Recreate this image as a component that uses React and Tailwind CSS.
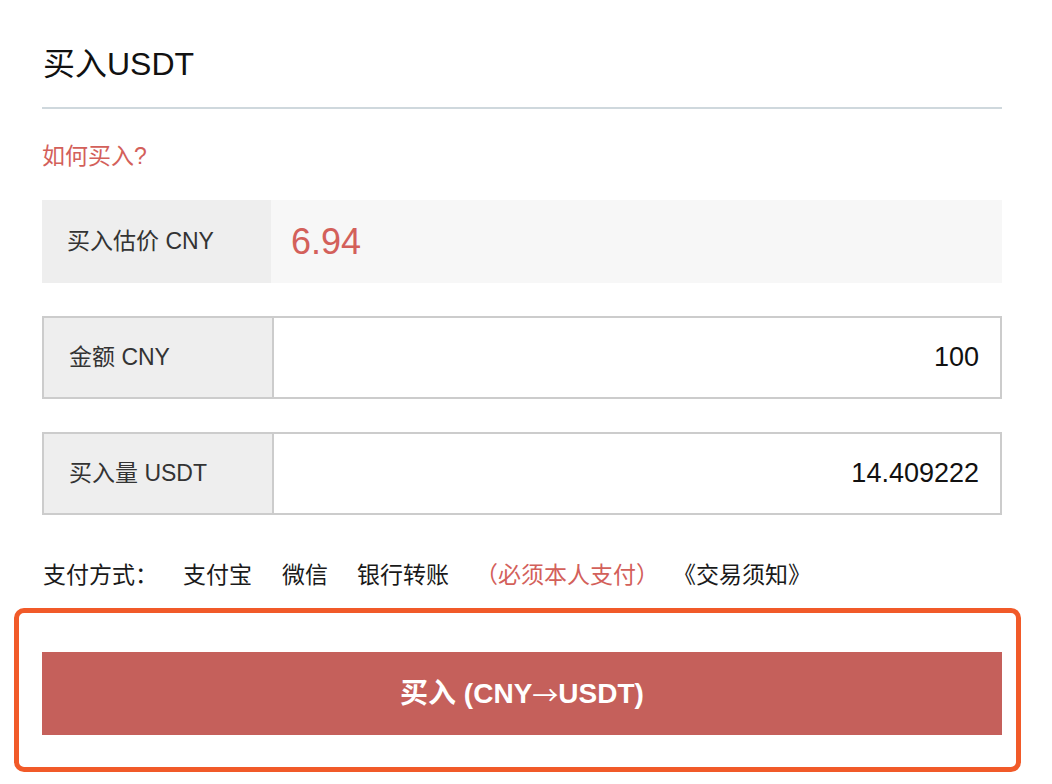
import React from "react";

const FONT = { fontFamily: '"Liberation Sans", "Noto Sans CJK SC", sans-serif' };

export default function App() {
  return (
    <div className="w-[1052px] h-[784px] bg-white overflow-hidden" style={FONT}>
      <div className="pl-[42px] w-[1002px]">
        <div className="pt-[44px] pb-[23px] border-b-2 border-[#cfd8dd]">
          <h1 className="text-[32px] leading-[40px] text-[#111] pl-[1px]">买入USDT</h1>
        </div>
        <div className="mt-[31px] text-[23px] leading-[32px] text-[#d3605a]">如何买入?</div>

        <div className="mt-[28px] flex h-[83px] bg-[#f7f7f7]">
          <div className="w-[229px] bg-[#eeeeee] flex items-center pl-[25px] text-[23px] text-[#333]">
            买入估价 CNY
          </div>
          <div className="flex items-center pl-[20px] text-[36px] text-[#d3605a]">6.94</div>
        </div>

        <div className="mt-[33px] flex h-[83px] border-2 border-[#cccccc]">
          <div className="w-[230px] bg-[#eeeeee] border-r-2 border-[#cccccc] flex items-center pl-[25px] text-[23px] text-[#333]">
            金额 CNY
          </div>
          <div className="flex-1 flex items-center justify-end pr-[21px] text-[27px] text-[#111]">100</div>
        </div>

        <div className="mt-[33px] flex h-[83px] border-2 border-[#cccccc]">
          <div className="w-[230px] bg-[#eeeeee] border-r-2 border-[#cccccc] flex items-center pl-[25px] text-[23px] text-[#333]">
            买入量 USDT
          </div>
          <div className="flex-1 flex items-center justify-end pr-[21px] text-[27px] text-[#111]">14.409222</div>
        </div>

        <div className="mt-[44px] flex items-center text-[23px] leading-[32px] text-[#1a1a1a] pl-[1px]">
          <span>支付方式：</span>
          <span className="ml-[25px]">支付宝</span>
          <span className="ml-[30px]">微信</span>
          <span className="ml-[29px]">银行转账</span>
          <span className="ml-[26px] text-[#d3605a]">（必须本人支付）</span>
          <span className="ml-[14px]">《交易须知》</span>
        </div>
      </div>

      <div className="mt-[17px] ml-[14px] w-[1007px] h-[164px] border-[5px] border-[#f15a29] rounded-[10px] pt-[39px] pl-[23px] pr-[14px]">
        <button className="w-full h-[83px] bg-[#c5605b] text-white font-bold text-[28px] flex items-center justify-center">
          <span>买入 (CNY</span>
          <span style={{ fontFamily: '"Noto Sans CJK SC", sans-serif' }} className="font-normal text-[26px]">→</span>
          <span>USDT)</span>
        </button>
      </div>
    </div>
  );
}
